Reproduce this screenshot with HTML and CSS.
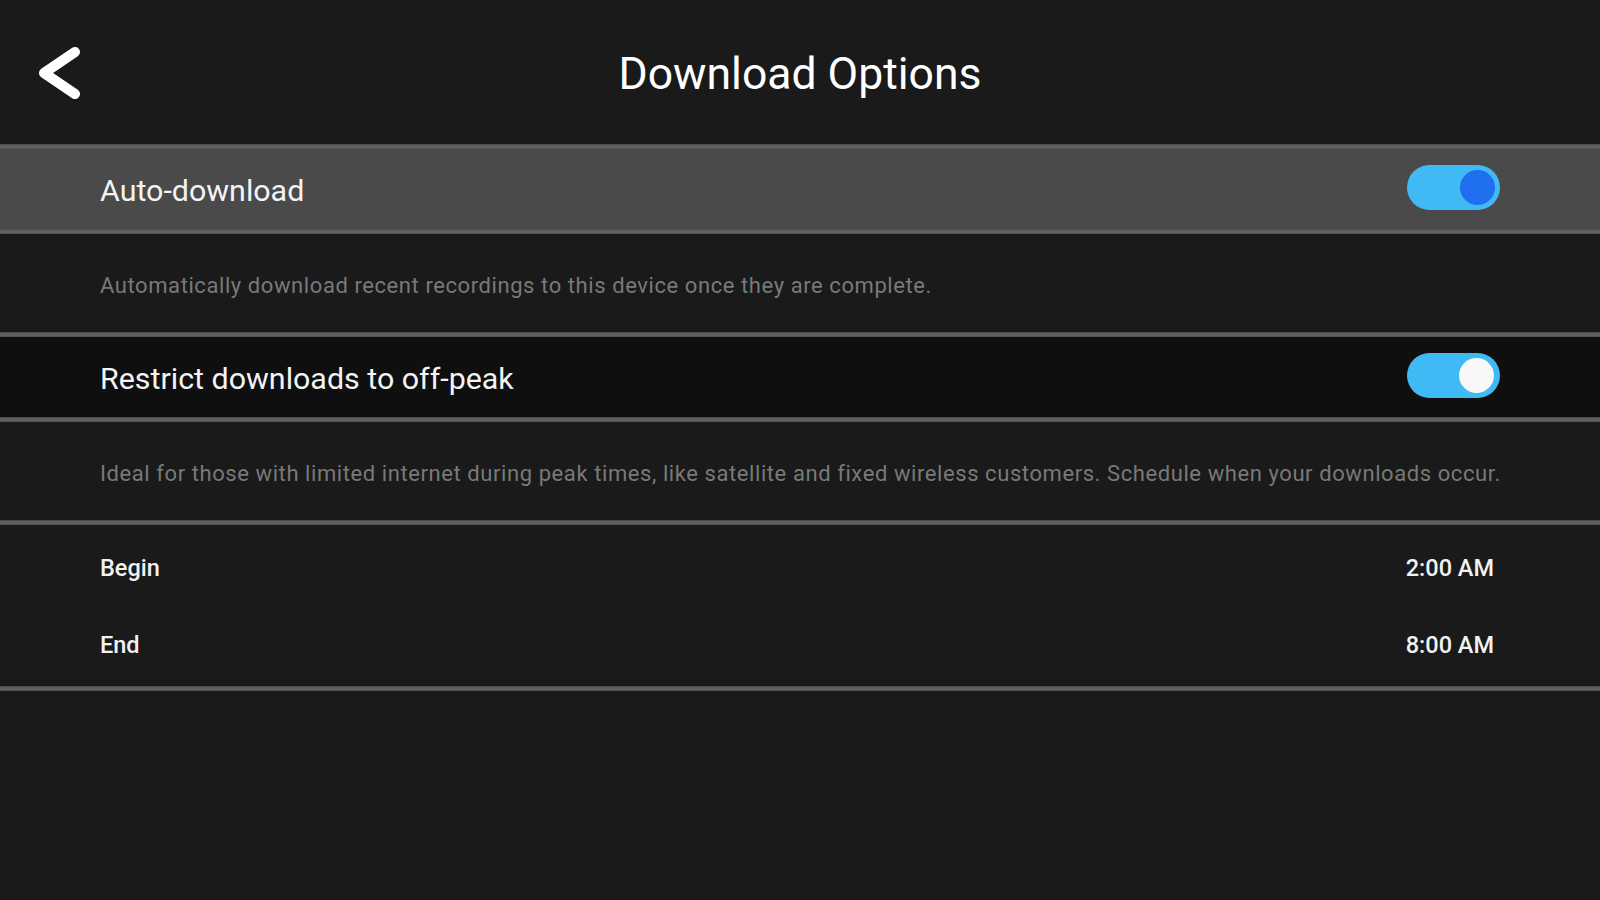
FILE: index.html
```html
<!DOCTYPE html>
<html>
<head>
<meta charset="utf-8">
<title>Download Options</title>
<link rel="stylesheet" href="styles.css">
</head>
<body>
<div class="screen">
  <header class="topbar">
    <div class="back">
      <svg class="back-icon" width="50" height="60" viewBox="0 0 50 60">
        <path d="M45 9 L14 30 L45 51" fill="none" stroke="#ffffff" stroke-width="10" stroke-linecap="round" stroke-linejoin="round"/>
      </svg>
    </div>
    <h1 class="title">Download Options</h1>
    <div class="spacer"></div>
  </header>
  <div class="sep"></div>
  <div class="row row-focused">
    <span class="row-label">Auto-download</span>
    <span class="toggle on"><span class="knob knob-blue"></span></span>
  </div>
  <div class="sep"></div>
  <div class="desc desc-1">Automatically download recent recordings to this device once they are complete.</div>
  <div class="sep"></div>
  <div class="row row-dark">
    <span class="row-label">Restrict downloads to off-peak</span>
    <span class="toggle on"><span class="knob knob-white"></span></span>
  </div>
  <div class="sep"></div>
  <div class="desc desc-2">Ideal for those with limited internet during peak times, like satellite and fixed wireless customers. Schedule when your downloads occur.</div>
  <div class="sep"></div>
  <div class="times">
    <div class="time-row"><span class="time-label">Begin</span><span class="time-value">2:00 AM</span></div>
    <div class="time-row"><span class="time-label">End</span><span class="time-value">8:00 AM</span></div>
  </div>
  <div class="sep"></div>
</div>
</body>
</html>
```

FILE: styles.css
```css
html, body {
  margin: 0;
  padding: 0;
  background: #1a1a1a;
}
body {
  width: 1600px;
  height: 900px;
  overflow: hidden;
  font-family: Roboto, "Noto Sans", "Liberation Sans", sans-serif;
  color: #ffffff;
}
.screen {
  display: flex;
  flex-direction: column;
  width: 1600px;
  height: 900px;
  background: #1a1a1a;
}
.topbar {
  height: 144px;
  display: grid;
  grid-template-columns: 1fr auto 1fr;
  align-items: center;
  flex: none;
}
.back {
  padding-left: 30px;
  display: flex;
  align-items: center;
  padding-top: 2px;
}
.back-icon {
  display: block;
}
.title {
  margin: 0;
  font-size: 44.5px;
  font-weight: 400;
  padding-top: 4px;
}
.sep {
  height: 5px;
  background: linear-gradient(#3a3a3a 0, #5e5e5e 1px, #626262 4px, #444 5px);
  flex: none;
}
.row {
  display: flex;
  align-items: center;
  justify-content: space-between;
  padding: 0 100px;
  flex: none;
  height: 80px;
}
.row-focused {
  background: #4a4a4a;
}
.row-dark {
  background: #0f0f0f;
}
.row-label {
  font-size: 30.4px;
  font-weight: 400;
  color: #f4f4f4;
  padding-top: 2px;
}
.toggle {
  position: relative;
  width: 93px;
  height: 45px;
  border-radius: 23px;
  background: #3fbaf5;
  margin-top: -3px;
}
.knob {
  position: absolute;
  top: 5px;
  right: 5px;
  width: 35px;
  height: 35px;
  border-radius: 50%;
}
.knob-blue {
  background: #1f6fef;
}
.knob-white {
  background: #f8f8f8;
  right: 6px;
}
.desc {
  display: flex;
  align-items: center;
  padding: 0 60px 0 100px;
  font-size: 22px;
  letter-spacing: 0.58px;
  color: #797979;
  white-space: nowrap;
  flex: none;
  height: 98px;
  box-sizing: border-box;
  padding-top: 4px;
}
.times {
  height: 161px;
  padding: 4px 106px 0 100px;
  box-sizing: border-box;
  flex: none;
}
.time-row {
  height: 77px;
  display: flex;
  align-items: center;
  justify-content: space-between;
}
.time-label, .time-value {
  font-size: 23.5px;
  font-weight: 500;
  color: #f2f2f2;
}
```
